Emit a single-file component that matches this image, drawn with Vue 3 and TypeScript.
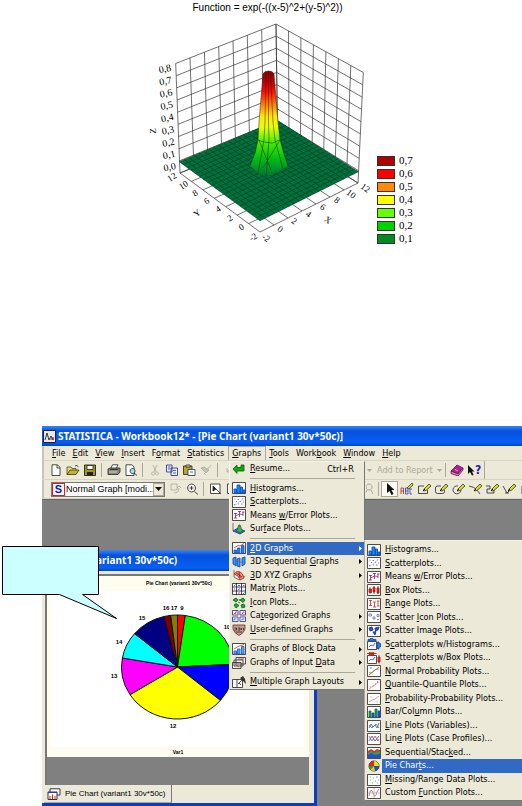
<script setup lang="ts">
type Shape = [d: string, fill: string, stroke?: string]
interface Entry { label: string; icon: string; sub?: boolean; active?: boolean; shortcut?: string }
interface Tool { name: string; icon: string; pressed?: boolean }

/* ---------- icons, drawn on a 14 x 12 grid ---------- */
const frame: Shape = ['M.5 .5H13.5V11.5H.5Z', '#fff', '#222']
const N = 'none'
const pen: Shape[] = [['M7 6L12 1L14 3L9 7.500L6.500 8Z', '#d8e020', '#333'], ['M6 8L8 6', N, '#000']]

const icons: Record<string, Shape[]> = {
  resume: [['M1 6L5 2V4.500H9V2H12V8H5V10.500Z', '#12a812', '#075c07']],
  hist: [frame, ['M2 11V7H4.500V11Z M5 11V3H8V11Z M8.500 11V5H10.500V11Z M11 11V8H13V11Z', '#1590f0', '#0540c0']],
  scatter: [frame, ['M2 8.500H3.500M4 5.500H5M6 8H7M5.500 3.500H7M8 5.500H9M10 3H11M9 8H10.500M11 6H12M2.500 3H3.500', N, '#4a58e0'], ['M2 10L12 2', N, '#b9c0f6']],
  means: [frame, ['M2 4.500H5M3.500 4.500V9M2 9H5M6 2.500H9M7.500 2.500V8M10 3H12.500M11 3V7', N, '#a01858'], ['M3.500 7L7.500 5L11 5.500', N, '#8030a0']],
  surface: [['M1 8L6 5L13 8L8 11Z', '#2a7ae8', '#1030a0'], ['M4 8Q6 7 6.500 2.500Q8 1 8.500 3Q9 7 11 8L8 9.500Z', '#38b848', '#206020'], ['M6.500 4Q7 1 8.300 3.500Z', '#e03020'], ['M1 0V8', N, '#555']],
  g2d: [frame, ['M2 11V8H4.500V11Z M5.500 11V6H8V11Z M9.500 11V3.500H12V11Z', '#2580f0', '#1450c0'], ['M2 6L6 3.500L8 4L12 1.500', N, '#e02828']],
  seq3d: [['M1 2L4 1V10L1 8Z M5 3L8 2V11L5 10Z M10 2L13 1V8L10 10Z', '#28a0f0', '#1238b0'], ['M4 5H6M8 6H10', N, '#e03030']],
  xyz3d: [['M2 1V8L7 11L13 7', N, '#555'], ['M2 5Q5 1 8 3Q11 4 12 9L8 11Q7 6 2 5Z', '#e89078', '#b02020'], ['M4 4L10 8M7 3L8 9', N, '#702020']],
  matrix: [frame, ['M4.500 0V12M9.500 0V12M0 4H14M0 8H14', N, '#181860'], ['M2 3L3.500 1.500M6 7L8 5.500M11 11L12.500 9.500M6 2.500H8', N, '#2040e0'], ['M2 6H3M11 2.500H12.500M6 10H8', N, '#d02020']],
  iconplot: [['M1 3L4 1L6 3L4 5Z M8 3L11 1L13 3L11 5.500Z M2 8L4 6.500L7 8.500L4 11Z M9 8L12 7L13 10L10 11Z', '#20b030', '#0a5a18'], ['M6 5L8 6M7 2L8 4', N, '#0a5a18']],
  categ: [['M.5 .5H6V5H.5Z M8 .5H13.500V5H8Z M.5 7H6V11.500H.5Z M8 7H13.500V11.500H8Z', '#fff', '#282890'], ['M2 3.500H3.500V2H5M10 3.500H11V2H12.500', N, '#d02020'], ['M2 10.500V9H4.500M10 10.500V9H12.500', N, '#2040e0']],
  user: [['M1 1H13V5Q12 9 7 11.500Q2 9 1 5Z', '#c49a94', '#63302c'], ['M2.500 4H4.500V6H2.500M6 4H8V6H6M9.500 4V6M11.500 4V6M4 8H10', N, '#38201c']],
  block: [frame, ['M2 11V8H4.500V11Z M5.500 11V6H8V11Z M9.500 11V3.500H12V11Z', '#58a8f4', '#1450c0'], ['M2 6L6 3.500L12 1.500', N, '#e02828']],
  input: [['M4 .5H13.500V7H4Z M2 3H11V9H2Z M.5 5.500H9V11.500H.5Z', '#f4f4ee', '#222'], ['M3 7L7 10M6 2H12', N, '#b02020']],
  layouts: [['M.5 3.500H10.500V11.500H.5Z', '#fff', '#222'], ['M5 3.500V11.500M6 8L12 2M7 7L9 9', N, '#222'], ['M8 2L11 0L13 3L14 8L11 5Z', '#333']],
  box: [frame, ['M2 5H4.500V8.500H2Z M6 3.500H8V8H6Z M10 4H12V9H10Z', '#e83838', '#b01010'], ['M3 3V10M7 2V10M11 2V10', N, '#b01010']],
  range: [frame, ['M2 2.500H5M3.500 2.500V7.500M2 7.500H5M6 4H9M7.500 4V9M6 9H9M10 3H12.500M11 3V8M10 8H12.500', N, '#c82828']],
  sicon: [frame, ['M2 3H4.500V5H2ZM6 6H8V8H6ZM10 3.500H12V5.500H10ZM10 8.500H12', N, '#6a6aa8']],
  simage: [frame, ['M2 3L5 2L6 5L3 6Z M8 3L12 2L11 5L8.500 6Z M6 7L9 6.500L8 10Z', '#2848e8', '#1028a0']],
  shist: [['M.5 3.500H9.500V11.500H.5Z', '#fff', '#222'], ['M1 3V1.500H3V.5H6V1.500H9V3Z M10.500 4H12V5.500H13.500V9H12V11H10.500Z', '#2880f0', '#1040b0'], ['M2 9L4 7L6 8L8 5', N, '#3040d0']],
  sbox: [['M.5 3.500H9.500V11.500H.5Z', '#fff', '#222'], ['M2 .8H7V2.500H2Z M11 5H13V10H11Z', '#e84848', '#b01818'], ['M0 1.500H9.500M12 3V11.500', N, '#b01818'], ['M2 9L4 7L6 8L8 5', N, '#3040d0']],
  normal: [frame, ['M2 10L12 2', N, '#e04040'], ['M2 8L5 7.500L8 4.500L12 4M3 3H5', N, '#30a050']],
  quant: [frame, ['M2 10L12 3', N, '#e89090'], ['M3 8H4M5.500 7H7M8 5H9M10.500 4V2', N, '#c06060']],
  prob: [frame, ['M2 9L5 7L8 6L12 3', N, '#e07878'], ['M3 4H5M9 9H11', N, '#d8b0b0']],
  bar: [frame, ['M2 11V5H4V11Z M8 11V3H10V11Z', '#20a040', '#107030'], ['M5 11V7H7V11Z M11 11V5H13V11Z', '#2058e8', '#1040b0']],
  line: [frame, ['M2 8L4 4L6 7L8 5L10 8L12 3', N, '#3048e0'], ['M2 5L5 8L9 4L12 8', N, '#309060']],
  linec: [frame, ['M2 3L5 8L8 3L11 8L12 6', N, '#d03060'], ['M2 8L5 3L8 8L12 3', N, '#3048e0']],
  stack: [frame, ['M1 5L4 3L7 5L10 3L13 4V11H1Z', '#38a040'], ['M1 8L4 6L8 8L13 7V11H1Z', '#2050d8'], ['M1 4L4 2L7 4L10 2L13 3V5L10 4L7 6L4 4L1 6Z', '#d83030']],
  pie: [['M7 1A5 5 0 1 0 7 11A5 5 0 1 0 7 1Z', '#202020', '#111'], ['M7 6V1A5 5 0 0 1 12 6Z', '#f0e020'], ['M7 6H2A5 5 0 0 1 7 1Z', '#e02828'], ['M7 6L3.500 9.500A5 5 0 0 1 2 6Z', '#20a040'], ['M7 6H12A5 5 0 0 1 8 11Z', '#2848d8'], ['M7 6L8 11A5 5 0 0 1 3.500 9.500Z', '#e8d020']],
  missing: [frame, ['M3 3H4M6 4H7M9 3H11M3 6H4M8 7H9M11 6H12M5 9H6M10 9H11', N, '#58a8a0']],
  custom: [frame, ['M2 9Q4 -1 6 6Q8 13 10 5L12 2', N, '#b06070'], ['M7 1V11M1 6H13', N, '#c8a8a8']],
  fresh: [['M3 .8H8.500L11 3.500V11.500H3Z', '#fff', '#222'], ['M8 1V4H11', N, '#222']],
  open: [['M1 10.500V3H5L6 4.500H10V6', '#f0e060', '#444'], ['M1 10.500L4 6H13L10 10.500Z', '#c8b420', '#333'], ['M9 2Q11 .5 12.500 3', N, '#222']],
  save: [['M1.500 1H12.500V11.500H1.500Z', '#a09818', '#111'], ['M4 1.500H10V5.500H4Z', '#fff', '#222'], ['M4 8H10V11.500H4Z', '#222']],
  print: [['M4 4L5.500 .8H11L9.500 4', '#fff', '#222'], ['M1 5L3 4H13V8L11 10.500H1Z', '#8c887c', '#222'], ['M2 8H10', N, '#e8e4d0'], ['M3 5.500H11', N, '#222']],
  preview: [['M2 .8H8L10 3V11.500H2Z', '#fff', '#222'], ['M8.500 4.500A2.500 2.500 0 1 0 8.600 4.500Z', '#a8e0e8', '#222'], ['M10 9L13 11.500', N, '#222']],
  cut: [['M5 1L8 8M9 1L6 8M5 8A1.500 1.500 0 1 0 5.100 8M9 8A1.500 1.500 0 1 0 9.100 8', N, '#aca899']],
  copy: [['M1.500 1H7V8H1.500Z M6 4H12.500V11.500H6Z', '#e8ecff', '#202880'], ['M3 3H5.500M3 5H5M8 6.500H11M8 9H11', N, '#303890']],
  paste: [['M1.500 2H10V10.500H1.500Z', '#b8a818', '#222'], ['M4 1H8V3H4Z', '#ddd', '#222'], ['M6 5.500H13V11.500H6Z', '#fff', '#202880'], ['M8 8H11', N, '#303890']],
  brush: [['M2 4L7 9L10 6L5 3Z', '#c8c4b0', '#aca899'], ['M8 6L12 1M5 9L7 11', N, '#aca899']],
  link: [['M9 3L4 8M4 4V8H8', N, '#aca899']],
  book: [['M1 7L7 1L13 4L8 10Z', '#b020a0', '#501060'], ['M1 7V9.500L8 12L13 6V4L8 10Z', '#f09080', '#501060'], ['M5 5.500L8 7', N, '#ffd040']],
  help: [['M2 1V10L4 8L6 11.500L7.500 11L6 7.500H8.500Z', '#111']],
  rotate: [['M3 1H9V7H3Z M6 10Q11 10 11 5', N, '#aca899'], ['M9 5L11 3L13 5', N, '#aca899']],
  zoomin: [['M6.500 1A4 4 0 1 0 6.600 1Z', '#f4f2e6', '#222'], ['M9.500 8.500L13 11.500M6.500 3V7M4.500 5H8.500', N, '#222']],
  zoombox: [['M1.500 1H11V10.500H1.500Z', '#fff', '#222'], ['M4 3V8L7 6ZM7 6L12 11', '#222', '#222']],
  magnify: [['M6 1A3 3 0 1 0 6.100 1ZM4 7L2 11M8 7L10 11', N, '#aca899']],
  arrow: [['M4 0V10L6.500 8L8.500 12L10.500 11L8.500 7H11.500Z', '#111']],
  abc: [['M1 11V5H3.500V11M1 8H3.500', N, '#c02020'], ['M5.500 5V11H8V8H5.500V5H8V8', N, '#2040c0'], ['M12 6H10V11H12', N, '#2040c0'], ['M7 5L12 0L13 2L9 6Z', '#d8e020', '#333']],
  rect: [['M10.500 7V10.500H1.500V3H7', N, '#222'], ...pen],
  round: [['M10.500 7V8.500Q10.500 10.500 8.500 10.500H3.500Q1.500 10.500 1.500 8.500V5Q1.500 3 3.500 3H7', N, '#222'], ...pen],
  circle: [['M7 3A4 4 0 1 0 10 7', N, '#222'], ...pen],
  arc: [['M1 3Q6 4 8 6Q10 8 12 11', N, '#222'], ...pen],
  poly: [['M1 3H5V6H2V10H9V7', N, '#222'], ...pen],
  vline: [['M1 3L5 10L8 7M3 10H7', N, '#222'], ...pen],
  obj: [['M3 3H11V11H3ZM5 1V5', '#fff', '#222']],
  tab: [['M3 .8H13V7H3Z', '#fff', '#335'], ['M1 4H10V11.500H1Z', '#fff', '#333'], ['M1 4.500H10', N, '#2040c0'], ['M3 11V8M5.500 11V6.500M8 11V8', N, '#d02020']],
}

/* ---------- menus; "&" marks the underlined letter ---------- */
const split = (s: string) => {
  const i = s.indexOf('&')
  return i < 0 ? [s, '', ''] : [s.slice(0, i), s[i + 1], s.slice(i + 2)]
}
const menuBar = ['&File', '&Edit', '&View', '&Insert', 'F&ormat', '&Statistics', '&Graphs', '&Tools', 'Work&book', '&Window', '&Help']

const graphsMenu: (Entry | null)[] = [
  { label: '&Resume...', icon: 'resume', shortcut: 'Ctrl+R' },
  null,
  { label: '&Histograms...', icon: 'hist' },
  { label: '&Scatterplots...', icon: 'scatter' },
  { label: 'Means &w/Error Plots...', icon: 'means' },
  { label: 'Sur&face Plots...', icon: 'surface' },
  null,
  { label: '&2D Graphs', icon: 'g2d', sub: true, active: true },
  { label: '3D Sequential &Graphs', icon: 'seq3d', sub: true },
  { label: '&3D XYZ Graphs', icon: 'xyz3d', sub: true },
  { label: 'Matri&x Plots...', icon: 'matrix' },
  { label: '&Icon Plots...', icon: 'iconplot' },
  { label: 'Ca&tegorized Graphs', icon: 'categ', sub: true },
  { label: '&User-defined Graphs', icon: 'user', sub: true },
  null,
  { label: 'Graphs of Bloc&k Data', icon: 'block', sub: true },
  { label: 'Graphs of Input &Data', icon: 'input', sub: true },
  null,
  { label: '&Multiple Graph Layouts', icon: 'layouts', sub: true },
]
const subMenu: Entry[] = [
  { label: '&Histograms...', icon: 'hist' },
  { label: '&Scatterplots...', icon: 'scatter' },
  { label: 'Means &w/Error Plots...', icon: 'means' },
  { label: '&Box Plots...', icon: 'box' },
  { label: '&Range Plots...', icon: 'range' },
  { label: 'Scatter &Icon Plots...', icon: 'sicon' },
  { label: 'Scatter Ima&ge Plots...', icon: 'simage' },
  { label: 'S&catterplots w/Histograms...', icon: 'shist' },
  { label: 'Sc&atterplots w/Box Plots...', icon: 'sbox' },
  { label: '&Normal Probability Plots...', icon: 'normal' },
  { label: '&Quantile-Quantile Plots...', icon: 'quant' },
  { label: '&Probability-Probability Plots...', icon: 'prob' },
  { label: 'Bar/Col&umn Plots...', icon: 'bar' },
  { label: '&Line Plots (Variables)...', icon: 'line' },
  { label: 'Lin&e Plots (Case Profiles)...', icon: 'linec' },
  { label: 'Sequential/Stac&ked...', icon: 'stack' },
  { label: 'Pie Char&ts...', icon: 'pie', active: true },
  { label: '&Missing/Range Data Plots...', icon: 'missing' },
  { label: 'Custom &Function Plots...', icon: 'custom' },
]

const mainTools: (Tool | null)[] = [
  { name: 'New', icon: 'fresh' }, { name: 'Open', icon: 'open' }, { name: 'Save', icon: 'save' }, null,
  { name: 'Print', icon: 'print' }, { name: 'Preview', icon: 'preview' }, null,
  { name: 'Cut', icon: 'cut' }, { name: 'Copy', icon: 'copy' }, { name: 'Paste', icon: 'paste' }, { name: 'Format painter', icon: 'brush' }, null,
  { name: 'Link', icon: 'link' },
]
const viewTools: (Tool | null)[] = [
  { name: 'Rotate', icon: 'rotate' }, { name: 'Zoom in', icon: 'zoomin' }, null,
  { name: 'Zoom area', icon: 'zoombox' }, { name: 'Select area', icon: 'zoombox' },
]
const drawTools: Tool[] = [
  { name: 'Select', icon: 'arrow', pressed: true }, { name: 'Text', icon: 'abc' }, { name: 'Rectangle', icon: 'rect' },
  { name: 'Rounded rectangle', icon: 'round' }, { name: 'Ellipse', icon: 'circle' }, { name: 'Arc', icon: 'arc' },
  { name: 'Polyline', icon: 'poly' }, { name: 'Line', icon: 'vline' }, { name: 'Object', icon: 'obj' },
]

/* ---------- surface plot ---------- */
type P = [number, number]
const mix = (a: P, b: P, t: number): P => [a[0] + (b[0] - a[0]) * t, a[1] + (b[1] - a[1]) * t]
// corners in the order front, right (x = 12), left (y = 12), back
const low: P[] = [[260, 232], [358, 183], [180, 173], [277.5, 133]]
const high: P[] = [[254, 130], [363.3, 72.500], [175.700, 63.500], [276, 24]]
const project = (x: number, y: number, z: number): P => {
  const bottom = mix(mix(low[0], low[1], x), mix(low[2], low[3], x), y)
  const top = mix(mix(high[0], high[1], x), mix(high[2], high[3], x), y)
  return mix(bottom, top, z)
}
const seg = (a: P, b: P) => `M${a.map(v => v.toFixed(1))}L${b.map(v => v.toFixed(1))}`
const boxLines: string[] = []
for (let i = 0; i <= 7; i++) {
  const t = i / 7
  boxLines.push(seg(project(t, 1, 0), project(t, 1, 1)), seg(project(1, t, 0), project(1, t, 1)))
  boxLines.push(seg(project(t, 0, 0), project(t, 1, 0)), seg(project(0, t, 0), project(1, t, 0)))
}
for (let i = 0; i <= 9; i++) {
  boxLines.push(seg(project(0, 1, i / 9), project(1, 1, i / 9)), seg(project(1, 1, i / 9), project(1, 0, i / 9)))
}
const flat: P[] = [[260, 220.700], [358.3, 171.700], [179.3, 161.700], [277.5, 120.500]]
const onFlat = (x: number, y: number) => mix(mix(flat[0], flat[1], x), mix(flat[2], flat[3], x), y)
const floorLines: string[] = []
for (let i = 0; i <= 20; i++) {
  const t = i / 20
  floorLines.push(seg(onFlat(t, 0), onFlat(t, 1)), seg(onFlat(0, t), onFlat(1, t)))
}
const floor = [flat[0], flat[1], flat[3], flat[2]].map(p => p.join()).join(' ')

const zTicks = ['0,8', '0,7', '0,6', '0,5', '0,4', '0,3', '0,2', '0,1', '0,0'].map((t, i) => ({ t, x: 164.7 + i * 0.6, y: 68 + i * 12.3 }))
const ticks = ['-2', '0', '2', '4', '6', '8', '10', '12']
const xTicks = ticks.map((t, i) => ({ t, x: 266 + i * 14.2, y: [238, 229, 221, 214, 207, 200, 194, 188][i] }))
const yTicks = ticks.map((t, i) => ({ t, x: 253 - i * 11.6, y: [237, 227, 218, 209, 201, 193, 185, 177][i] }))

const legend = [
  ['0,7', '#b00000'], ['0,6', '#ff0000'], ['0,5', '#ff8c00'], ['0,4', '#ffff00'],
  ['0,3', '#66ff00'], ['0,2', '#00d200'], ['0,1', '#008c1e'],
]

/* ---------- pie chart: start and end angle in degrees, clockwise from the top ---------- */
const rim = (deg: number): string => {
  const a = (deg * Math.PI) / 180
  return `${(177.5 + 56 * Math.sin(a)).toFixed(1)} ${(666 - 52 * Math.cos(a)).toFixed(1)}`
}
const slices = [
  [0, 8, '#ff0000'], [8, 87, '#00ff00'], [87, 130, '#0000ff'], [130, 238, '#ffff00'], [238, 280, '#ff00ff'],
  [280, 310, '#00ffff'], [310, 346, '#000080'], [346, 353, '#800000'], [353, 360, '#808000'],
].map(([a, b, fill]) => ({ fill: String(fill), d: `M177.500 666L${rim(Number(a))}A56 52 0 0 1 ${rim(Number(b))}Z` }))
const pieLabels: [string, number, number][] = [
  ['9', 182, 609], ['17', 174, 609], ['16', 166, 609], ['15', 142, 619], ['14', 119, 643],
  ['13', 114, 677], ['12', 173, 727], ['10', 227, 628],
]
</script>

<template>
  <main class="page">
    <figure class="surface">
      <figcaption>Function = exp(-((x-5)^2+(y-5)^2))</figcaption>
      <div class="plot">
        <svg class="plot-area" width="377" height="230" viewBox="0 15 377 230" aria-label="Surface plot">
          <defs>
            <linearGradient id="heat" gradientUnits="userSpaceOnUse" x1="0" y1="71" x2="0" y2="177">
              <stop offset="0" stop-color="#900000" />
              <stop offset=".1" stop-color="#c00000" />
              <stop offset=".2" stop-color="#ff1000" />
              <stop offset=".33" stop-color="#ff8c00" />
              <stop offset=".43" stop-color="#ffe800" />
              <stop offset=".53" stop-color="#e8ff00" />
              <stop offset=".66" stop-color="#50f000" />
              <stop offset=".82" stop-color="#00c010" />
              <stop offset="1" stop-color="#007038" />
            </linearGradient>
          </defs>
          <path class="wall" :d="boxLines.join('')" />
          <polygon :points="floor" fill="#00703c" />
          <path class="mesh" :d="floorLines.join('')" />
          <path fill="url(#heat)" d="M263 74Q264 71 268.500 71Q273 71 274 74L278 122L280 140L284 154L288 166L277 172L266 177L258 173L250 166L255 153L258 140L259 122Z" />
          <path class="ridge" d="M263 74Q264 71 268.500 71Q273 71 274 74L278 122L280 140L284 154L288 166M263 74L259 122L258 140L255 153L250 166M266 73L265 122L264 140L258 173M270.500 73L273 122L275 140L283 169M268.500 71V122L269 140L266 177M258 140L264 142L272 143L280 140M259 140L271 170M280 140L263 168" />
          <g class="ticks">
            <text v-for="k in zTicks" :key="k.t" :x="k.x" :y="k.y + 4" :transform="`rotate(-12 ${k.x} ${k.y})`">{{ k.t }}</text>
            <text v-for="k in xTicks" :key="'x' + k.t" class="small" :x="k.x" :y="k.y + 3" :transform="`rotate(35 ${k.x} ${k.y})`">{{ k.t }}</text>
            <text v-for="k in yTicks" :key="'y' + k.t" class="small" :x="k.x" :y="k.y + 3" :transform="`rotate(-32 ${k.x} ${k.y})`">{{ k.t }}</text>
            <text class="small" x="153" y="134" transform="rotate(-90 153 131)">Z</text>
            <text class="small" x="197" y="216" transform="rotate(-40 197 213)">Y</text>
            <text class="small" x="328" y="223" transform="rotate(35 328 220)">X</text>
          </g>
        </svg>
        <ul class="legend">
          <li v-for="[t, c] in legend" :key="t"><span class="swatch" :style="{ background: c }"></span>{{ t }}</li>
        </ul>
      </div>
    </figure>

    <section class="app">
      <header class="titlebar">
        <svg class="logo" width="13" height="13" viewBox="0 0 13 13"><path d="M.5 .5H12.500V12.500H.5Z" fill="#e8e8e8" stroke="#223" /><path d="M2 10L4 3L6 10L8 6L10 10V7" fill="none" stroke="#333" /><path d="M7 9H11" stroke="#c02020" /></svg>
        <h1>STATISTICA - Workbook12* - [Pie Chart (variant1 30v*50c)]</h1>
      </header>

      <nav class="menubar">
        <button v-for="m in menuBar" :key="m" type="button" :class="{ open: m === '&Graphs' }">{{ split(m)[0] }}<u>{{ split(m)[1] }}</u>{{ split(m)[2] }}</button>
      </nav>

      <div class="toolbar">
        <div class="left">
          <template v-for="(t, i) in mainTools" :key="i">
            <button v-if="t" class="tool" type="button" :aria-label="t.name">
              <svg width="14" height="12" viewBox="0 0 14 12"><path v-for="(s, j) in icons[t.icon]" :key="j" :d="s[0]" :fill="s[1]" :stroke="s[2] ?? 'none'" /></svg>
            </button>
            <i v-else class="sep"></i>
          </template>
        </div>
        <div class="right top">
          <svg class="caret" width="5" height="3" viewBox="0 0 5 3"><path d="M0 0H5L2.500 3Z" fill="#aca899" /></svg>
          <button class="report" type="button" disabled>Add to Report</button>
          <svg class="caret" width="5" height="3" viewBox="0 0 5 3"><path d="M0 0H5L2.500 3Z" fill="#aca899" /></svg>
          <i class="sep"></i>
          <button class="tool" type="button" aria-label="Book">
            <svg width="14" height="12" viewBox="0 0 14 12"><path v-for="(s, j) in icons.book" :key="j" :d="s[0]" :fill="s[1]" :stroke="s[2] ?? 'none'" /></svg>
          </button>
          <button class="tool what" type="button">
            <svg width="8" height="12" viewBox="1 0 8 12"><path v-for="(s, j) in icons.help" :key="j" :d="s[0]" :fill="s[1]" /></svg>?
          </button>
        </div>
      </div>

      <div class="toolbar">
        <div class="left">
          <label class="combo">
            <b>S</b>
            <select aria-label="Graph style"><option>Normal Graph [modi...</option></select>
            <span class="drop"><svg width="7" height="4" viewBox="0 0 7 4"><path d="M0 0H7L3.500 4Z" fill="#111" /></svg></span>
          </label>
          <template v-for="(t, i) in viewTools" :key="i">
            <button v-if="t" class="tool" type="button" :aria-label="t.name">
              <svg width="14" height="12" viewBox="0 0 14 12"><path v-for="(s, j) in icons[t.icon]" :key="j" :d="s[0]" :fill="s[1]" :stroke="s[2] ?? 'none'" /></svg>
            </button>
            <i v-else class="sep"></i>
          </template>
        </div>
        <div class="right draw">
          <svg width="10" height="12" viewBox="3 0 10 12"><path v-for="(s, j) in icons.magnify" :key="j" :d="s[0]" :fill="s[1]" :stroke="s[2]" /></svg>
          <i class="sep"></i>
          <button v-for="t in drawTools" :key="t.name" class="tool" :class="{ pressed: t.pressed }" type="button" :aria-label="t.name">
            <svg width="14" height="12" viewBox="0 0 14 12"><path v-for="(s, j) in icons[t.icon]" :key="j" :d="s[0]" :fill="s[1]" :stroke="s[2] ?? 'none'" /></svg>
          </button>
        </div>
      </div>

      <div class="workspace">
        <article class="child">
          <h2>(variant1 30v*50c)</h2>
          <div class="client">
            <svg class="paper" viewBox="47 575 262 181" aria-label="Pie chart">
              <rect x="47" y="575" width="262" height="182" fill="#fffcf0" />
              <rect x="52" y="590" width="252" height="156" fill="#fff" />
              <path v-for="s in slices" :key="s.d" :d="s.d" :fill="s.fill" stroke="#111" stroke-width="1" />
              <text class="bold" x="179" y="584">Pie Chart (variant1 30v*50c)</text>
              <text v-for="l in pieLabels" :key="l[0]" class="num" :x="l[1]" :y="l[2]">{{ l[0] }}</text>
              <text class="var" x="178" y="753">Var1</text>
            </svg>
          </div>
          <footer>
            <button type="button" class="tab">
              <svg width="14" height="12" viewBox="0 0 14 12"><path v-for="(s, j) in icons.tab" :key="j" :d="s[0]" :fill="s[1]" :stroke="s[2] ?? 'none'" /></svg>
              Pie Chart (variant1 30v*50c)
            </button>
          </footer>
        </article>
      </div>

      <ul class="menu graphs">
        <template v-for="(e, i) in graphsMenu" :key="i">
          <li v-if="e">
            <button type="button" :class="{ active: e.active }">
              <svg width="14" height="12" viewBox="0 0 14 12"><path v-for="(s, j) in icons[e.icon]" :key="j" :d="s[0]" :fill="s[1]" :stroke="s[2] ?? 'none'" /></svg>
              <span class="text">{{ split(e.label)[0] }}<u>{{ split(e.label)[1] }}</u>{{ split(e.label)[2] }}</span>
              <span v-if="e.shortcut" class="key">{{ e.shortcut }}</span>
              <span v-if="e.sub" class="more"><svg width="3" height="5" viewBox="0 0 3 5"><path d="M0 0L3 2.500L0 5Z" fill="currentColor" /></svg></span>
            </button>
          </li>
          <li v-else class="rule"></li>
        </template>
      </ul>

      <ul class="menu sub">
        <li v-for="e in subMenu" :key="e.label">
          <button type="button" :class="{ active: e.active }">
            <svg width="14" height="12" viewBox="0 0 14 12"><path v-for="(s, j) in icons[e.icon]" :key="j" :d="s[0]" :fill="s[1]" :stroke="s[2] ?? 'none'" /></svg>
            <span class="text">{{ split(e.label)[0] }}<u>{{ split(e.label)[1] }}</u>{{ split(e.label)[2] }}</span>
          </button>
        </li>
      </ul>

      <svg class="callout" width="118" height="76" viewBox="0 0 118 76">
        <path d="M2.500 0.500H98.500V48.500H82.500L116.500 72.500L59.500 48.500H2.500Z" fill="#ccffff" stroke="#000" />
      </svg>
    </section>
  </main>
</template>

<style>
body { margin: 0; background: #fff; }
</style>

<style scoped>
.page {
  display: flex;
  flex-direction: column;
  min-height: 100vh;
  overflow: hidden;
  font: 9px/12px "DejaVu Sans Condensed", "DejaVu Sans", sans-serif;
  color: #000;
}
* { box-sizing: border-box; }
button {
  font: inherit;
  color: inherit;
  background: none;
  border: 0;
  padding: 0;
  margin: 0;
  white-space: nowrap;
}
ul { list-style: none; margin: 0; padding: 0; }
svg { flex: none; display: block; }
u { text-underline-offset: 1px; }

.surface { margin: 0 0 180px; }
.surface figcaption {
  padding: 1px 0 0 13px;
  font: 10px/14px "Liberation Sans", Arial, sans-serif;
  text-align: center;
}
.plot { display: flex; align-items: flex-end; height: 231px; }
.plot-area { margin-bottom: 1px; }
.legend { padding-bottom: 1px; font: 11px/13px "Liberation Serif", serif; }
.legend li { display: flex; align-items: center; gap: 4px; }
.swatch { width: 18px; height: 10px; border: 1px solid #333; }
.wall { fill: none; stroke: #333; stroke-width: 0.7; }
.mesh { fill: none; stroke: #003c1c; stroke-width: 0.6; }
.ridge { fill: none; stroke: #222; stroke-width: 0.5; }
.ticks text { font: 10px "Liberation Serif", serif; text-anchor: middle; }
.ticks .small { font-size: 9px; }

.app {
  position: relative;
  flex: 1;
  display: flex;
  flex-direction: column;
  margin-left: 42px;
  background: #ece9d8;
}
.titlebar {
  display: flex;
  align-items: center;
  gap: 2px;
  height: 20px;
  padding-left: 1px;
  background: linear-gradient(#3a86f4, #0650dc 25%, #0560f4 80%, #0346c4);
}
h1, h2 {
  margin: 0;
  font: bold 10px/20px "Noto Sans", "DejaVu Sans", sans-serif;
  color: #fff;
  white-space: nowrap;
}
.menubar {
  display: flex;
  height: 15px;
  padding-left: 5px;
  border-left: 2px solid #c9c5b2;
  border-bottom: 1px solid #d8d4c2;
}
.menubar button { padding: 0 4px 0 3px; line-height: 14px; }
.menubar .open { border: 1px solid #aca899; border-bottom: 0; line-height: 13px; }

.tool svg, .menu svg { stroke-width: 0.8; }
.toolbar { display: flex; height: 19px; border-bottom: 1px solid #d8d4c2; }
.toolbar .left { display: flex; align-items: center; flex: none; width: 322px; padding-left: 3px; border-left: 2px solid #c9c5b2; }
.toolbar .right { display: flex; align-items: center; flex: 1; min-width: 0; overflow: hidden; }
.toolbar .top { flex: none; width: 121px; padding-left: 3px; border-right: 1px solid #aca899; }
.toolbar .draw { padding-left: 2px; }
.draw .sep { margin: 0 2px; }
.tool { display: flex; align-items: center; justify-content: center; flex: none; width: 17px; height: 16px; }
.what { font-size: 12px; font-weight: bold; color: #2020b0; }
.pressed { background: #fbfaf5; border: 1px solid #aca899; }
.sep { flex: none; width: 1px; height: 14px; margin: 0 3px; background: #aca899; }
.report { padding: 0 4px 0 5px; color: #aca899; }
.combo { display: flex; align-items: center; width: 114px; height: 15px; margin: 0 1px 0 4px; background: #fff; border: 1px solid #777; flex: none; }
.combo b { flex: none; width: 13px; height: 13px; border: 1px solid #e02020; font: bold 11px/11px "Liberation Sans", sans-serif; color: #1010c0; text-align: center; }
.combo select { flex: 1; min-width: 0; appearance: none; border: 0; background: none; padding: 0 0 0 1px; font: 9px/12px "Liberation Sans", sans-serif; color: inherit; }
.drop { display: grid; place-items: center; width: 11px; height: 13px; background: #ece9d8; border: 1px solid #aca899; }

.workspace { flex: 1; padding-top: 50px; background: #808080; border-top: 1px solid #666; }
.child { width: 275px; background: #ece9d8; border-right: 3px solid #0a3cc4; border-bottom: 3px solid #0a3cc4; }
.child h2 { padding-left: 45px; line-height: 21px; background: linear-gradient(#3a86f4, #0650dc 25%, #0560f4 85%, #0346c4); }
.client { margin: 3px 5px 0 3px; padding-bottom: 28px; background: #808080; border-left: 2px solid #777; border-top: 2px solid #777; }
.paper { width: 100%; }
.paper text { font: 5px "Liberation Sans", sans-serif; text-anchor: middle; }
.paper .bold, .paper .var { font-weight: bold; }
.paper .num { font-size: 6px; font-weight: bold; }
.child footer { padding: 0 2px; }
.tab { display: flex; align-items: center; gap: 4px; height: 18px; padding: 0 5px 0 3px; font: 8px/16px "Liberation Sans", sans-serif; border-right: 1px solid #777; border-bottom: 1px solid #aca899; }

.menu {
  position: absolute;
  display: grid;
  background: #ece9d8;
  border: 1px solid #f6f4ea;
  border-right-color: #777;
  border-bottom-color: #777;
}
.graphs {
  left: 187px;
  top: 35px;
  width: 136px;
  height: 229px;
  grid-template-rows: 1fr 6px repeat(4, 1fr) 6px repeat(7, 1fr) 6px repeat(2, 1fr) 6px 1fr;
}
.sub {
  left: 322px;
  right: 0;
  top: 114px;
  height: 261px;
  padding-top: 2px;
  grid-template-rows: repeat(19, 1fr);
  border-left-color: #aca899;
  border-right: 0;
}
.menu li { min-height: 0; padding: 0 0 0 2px; }
.menu button { display: flex; align-items: center; gap: 1px; width: 100%; height: 100%; text-align: left; }
.text { flex: 1; align-self: stretch; display: block; padding-left: 3px; line-height: 13px; white-space: pre; }
.active { background: linear-gradient(#316ac5, #316ac5) 15px 0 no-repeat; color: #fff; }
.key { padding-right: 10px; }
.more { padding: 0 2px; }
.menu .rule { display: flex; align-items: center; padding: 0 9px 0 20px; }
.rule::before { content: ""; flex: 1; height: 1px; background: #aca899; }

.callout { position: absolute; left: -42px; top: 120px; }
</style>
